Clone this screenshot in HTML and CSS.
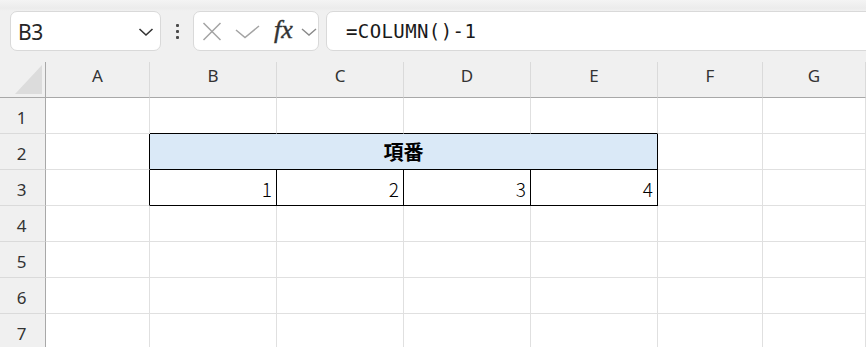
FILE: index.html
```html
<!DOCTYPE html>
<html lang="ja">
<head>
<meta charset="utf-8">
<title>Excel</title>
<link rel="stylesheet" href="styles.css">
</head>
<body>
<div class="app">
  <div class="toolbar">
    <div class="namebox">
      <span class="ref">B3</span>
      <svg class="chev" width="16" height="10" viewBox="0 0 16 10"><path d="M1.5 2 L8 8 L14.5 2" fill="none" stroke="#333" stroke-width="1.6"/></svg>
    </div>
    <div class="dots"><span></span><span></span><span></span></div>
    <div class="fxbox">
      <svg class="ic-x" width="20" height="19" viewBox="0 0 20 19"><path d="M1.5 1 L18.5 18 M18.5 1 L1.5 18" stroke="#a3a3a3" stroke-width="1.5" fill="none"/></svg>
      <svg class="ic-ok" width="25" height="14" viewBox="0 0 25 14"><path d="M1 5 L10 12.5 L24 1" stroke="#a3a3a3" stroke-width="1.5" fill="none"/></svg>
      <span class="fx">fx</span>
      <svg class="ic-dd" width="16" height="8" viewBox="0 0 16 8"><path d="M1 1 L8 7 L15 1" stroke="#8a8a8a" stroke-width="1.4" fill="none"/></svg>
    </div>
    <div class="formula">=COLUMN()-1</div>
  </div>
  <div class="sheet">
    <div class="corner"><span class="tri"></span></div>
    <div class="ch">A</div>
    <div class="ch">B</div>
    <div class="ch">C</div>
    <div class="ch">D</div>
    <div class="ch">E</div>
    <div class="ch">F</div>
    <div class="ch">G</div>

    <div class="rh">1</div>
    <div class="c"></div>
    <div class="c top"></div>
    <div class="c top"></div>
    <div class="c top"></div>
    <div class="c top"></div>
    <div class="c"></div>
    <div class="c"></div>

    <div class="rh">2</div>
    <div class="c left"></div>
    <div class="c tb head">項番</div>
    <div class="c"></div>
    <div class="c"></div>

    <div class="rh">3</div>
    <div class="c left"></div>
    <div class="c tb num">1</div>
    <div class="c tb num">2</div>
    <div class="c tb num">3</div>
    <div class="c tb num">4</div>
    <div class="c"></div>
    <div class="c"></div>

    <div class="rh">4</div>
    <div class="c"></div><div class="c"></div><div class="c"></div><div class="c"></div><div class="c"></div><div class="c"></div><div class="c"></div>
    <div class="rh">5</div>
    <div class="c"></div><div class="c"></div><div class="c"></div><div class="c"></div><div class="c"></div><div class="c"></div><div class="c"></div>
    <div class="rh">6</div>
    <div class="c"></div><div class="c"></div><div class="c"></div><div class="c"></div><div class="c"></div><div class="c"></div><div class="c"></div>
    <div class="rh">7</div>
    <div class="c"></div><div class="c"></div><div class="c"></div><div class="c"></div><div class="c"></div><div class="c"></div><div class="c"></div>
  </div>
</div>
</body>
</html>
```
FILE: styles.css
```css
* { box-sizing: border-box; }
html, body { margin: 0; padding: 0; }
body {
  width: 866px;
  height: 347px;
  overflow: hidden;
  background: #f0f0f0;
  font-family: "Noto Sans", "Open Sans", sans-serif;
  color: #333;
}
.app { width: 866px; }

.toolbar {
  height: 62px;
  padding: 11px 0 0 10px;
  display: flex;
  align-items: flex-start;
  background: linear-gradient(#f4f4f4 0, #ececec 8px, #f0f0f0 11px, #f0f0f0 100%);
}
.namebox, .fxbox, .formula {
  height: 40px;
  background: #fff;
  border: 1px solid #d9d9d9;
  border-radius: 7px;
  display: flex;
  align-items: center;
}
.namebox {
  width: 151px;
  padding: 0 6px 0 7px;
  justify-content: space-between;
}
.ref {
  font-size: 21px;
  color: #262626;
  letter-spacing: -0.3px;
  margin-top: 1px;
}
.chev { margin-top: 1px; }

.dots {
  width: 32px;
  height: 40px;
  display: flex;
  flex-direction: column;
  align-items: center;
  justify-content: center;
  gap: 3px;
}
.dots span {
  width: 3px;
  height: 3px;
  background: #4a4a4a;
  border-radius: 1px;
}

.fxbox {
  width: 126px;
  padding-left: 8px;
}
.ic-x { margin-left: 0; }
.ic-ok { margin-left: 13px; margin-top: 1px; }
.fx {
  font-family: "Liberation Serif", "DejaVu Serif", serif;
  font-style: italic;
  font-weight: normal;
  font-size: 26px;
  color: #333;
  margin-left: 14px;
  margin-top: -3px;
  letter-spacing: 0;
  -webkit-text-stroke: 0.4px #333;
}
.ic-dd { margin-left: 8px; margin-top: 1px; }

.formula {
  flex: 1;
  margin-left: 7px;
  margin-right: -12px;
  padding-left: 19px;
  font-family: "DejaVu Sans Mono", monospace;
  font-size: 19px;
  letter-spacing: 0.4px;
  color: #1a1a1a;
  border-top-right-radius: 0;
  border-bottom-right-radius: 0;
}

.sheet {
  display: grid;
  grid-template-columns: 46px 104px 127px 127px 127px 127px 105px 1fr;
  grid-template-rows: repeat(8, 36px);
  background: #fff;
}
.corner {
  background: #f0f0f0;
  border-right: 1px solid #a8a8a8;
  border-bottom: 1px solid #a8a8a8;
  position: relative;
}
.tri {
  position: absolute;
  left: 15px;
  top: 3px;
  width: 0;
  height: 0;
  border-style: solid;
  border-width: 0 0 29px 27px;
  border-color: transparent transparent #dcdcdc transparent;
}
.ch {
  background: #f0f0f0;
  border-right: 1px solid #dadada;
  border-bottom: 1px solid #a8a8a8;
  display: flex;
  align-items: center;
  justify-content: center;
  padding-bottom: 9px;
  font-size: 17px;
  color: #333;
}
.rh {
  background: #f0f0f0;
  border-right: 1px solid #a8a8a8;
  border-bottom: 1px solid #dadada;
  display: flex;
  align-items: center;
  justify-content: center;
  padding-top: 4px;
  padding-right: 2px;
  font-size: 17px;
  color: #333;
}
.c {
  border-right: 1px solid #e0e0e0;
  border-bottom: 1px solid #e0e0e0;
}
.c.top { border-bottom-color: #000; }
.c.left { border-right-color: #000; }
.c.tb {
  border-right-color: #000;
  border-bottom-color: #000;
}
.head {
  grid-column: span 4;
  background: #dae9f7;
  display: flex;
  align-items: center;
  justify-content: center;
  font-family: "Noto Sans CJK JP", sans-serif;
  font-weight: bold;
  font-size: 20px;
  color: #000;
}
.num {
  display: flex;
  align-items: center;
  justify-content: flex-end;
  padding-right: 4px;
  padding-top: 2px;
  font-family: "Noto Sans CJK JP", sans-serif;
  font-weight: 300;
  font-size: 19px;
  color: #000;
}
```
